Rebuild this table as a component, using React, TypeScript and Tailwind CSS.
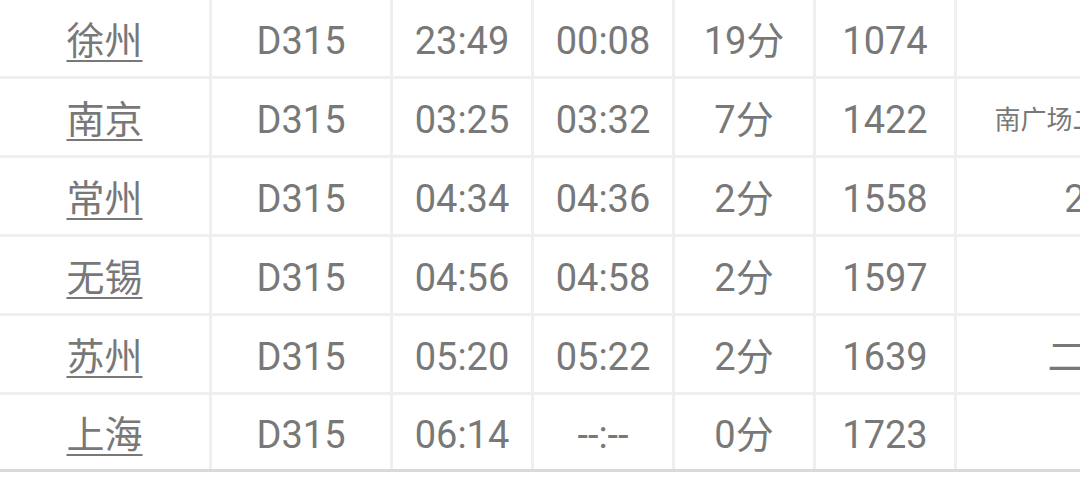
import React from 'react';

type Stop = {
  station: string;
  train: string;
  arrive: string;
  depart: string;
  stay: string;
  km: string;
  note?: string;
  noteSmall?: boolean;
};

const stops: Stop[] = [
  { station: '徐州', train: 'D315', arrive: '23:49', depart: '00:08', stay: '19分', km: '1074' },
  { station: '南京', train: 'D315', arrive: '03:25', depart: '03:32', stay: '7分', km: '1422', note: '南广场二楼候车', noteSmall: true },
  { station: '常州', train: 'D315', arrive: '04:34', depart: '04:36', stay: '2分', km: '1558', note: '2F' },
  { station: '无锡', train: 'D315', arrive: '04:56', depart: '04:58', stay: '2分', km: '1597' },
  { station: '苏州', train: 'D315', arrive: '05:20', depart: '05:22', stay: '2分', km: '1639', note: '二楼' },
  { station: '上海', train: 'D315', arrive: '06:14', depart: '--:--', stay: '0分', km: '1723' },
];

const cell = 'flex items-center justify-center pt-[5px] border-r-[3px] border-[#efefef]';

export default function App() {
  return (
    <div
      className="w-[1080px] h-[485px] overflow-hidden bg-white text-[#787878] text-[38px] leading-none"
      style={{ fontFamily: 'Roboto, "Noto Sans CJK SC", sans-serif' }}
    >
      <div className="w-[1334px] border-b-[3px] border-[#d9d9d9]">
        {stops.map((s, i) => (
          <div
            key={s.station}
            className={`grid grid-cols-[212px_181px_141px_141px_141px_141px_377px] ${
              i === stops.length - 1 ? 'h-[74px]' : 'h-[79px] border-b-[3px] border-[#efefef]'
            }`}
          >
            <div className={cell}>
              <a className="underline decoration-2 underline-offset-[6px] cursor-pointer">{s.station}</a>
            </div>
            <div className={cell}>{s.train}</div>
            <div className={cell}>{s.arrive}</div>
            <div className={cell}>{s.depart}</div>
            <div className={cell}>{s.stay}</div>
            <div className={cell}>{s.km}</div>
            <div className={`flex items-center justify-center pt-[5px] pr-[120px] ${s.noteSmall ? 'text-[26px]' : ''}`}>
              {s.note}
            </div>
          </div>
        ))}
      </div>
    </div>
  );
}
